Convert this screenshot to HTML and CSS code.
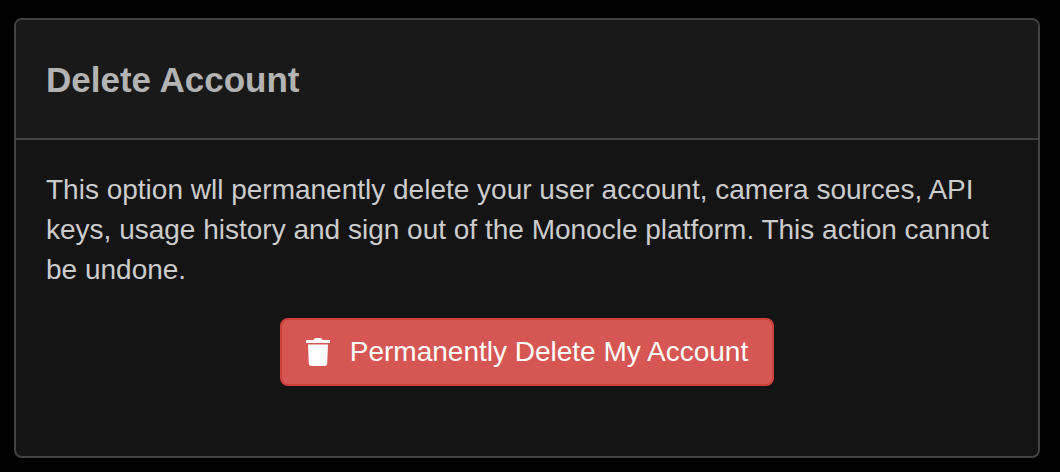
FILE: index.html
```
<!DOCTYPE html>
<html lang="en">
  <head>
    <meta charset="UTF-8" />
    <meta name="viewport" content="width=device-width, initial-scale=1.0" />
    <title>Delete Account</title>
    <link rel="stylesheet" href="styles.css">
  </head>
  <body>
    <section class="card">
      <div class="card-header">
        <h2>Delete Account</h2>
      </div>
      <div class="card-body">
        <p>
          This option wll permanently delete your user account, camera sources, API
          keys, usage history and sign out of the Monocle platform. This action cannot
          be undone.
        </p>
        <div class="card-actions">
          <button type="button" class="btn-danger">
            <svg class="icon" viewBox="0 0 24 28" aria-hidden="true">
              <path d="M.5 2H7.500L8.500.500Q8.800 0 9.500 0h5q.7 0 1 .5L16.500 2h7q.5 0 .5.500v2q0 .5-.5.500H.500Q0 5 0 4.500v-2Q0 2 .5 2z" />
              <path d="M2 6.500h20l-.8 19Q21 28 18.600 28H5.400Q3 28 2.800 25.500z" />
            </svg>
            Permanently Delete My Account
          </button>
        </div>
      </div>
    </section>
  </body>
</html>
```
FILE: styles.css
```
* {
  box-sizing: border-box;
  margin: 0;
  padding: 0;
}

body {
  font-family: "Liberation Sans", Arial, sans-serif;
  font-size: 28px;
  line-height: 40px;
  color: #ccc;
  background-color: #000;
  padding: 18px 20px 14px 14px;
}

.card {
  background-color: #141414;
  border: 2px solid #434343;
  border-radius: 8px;
  overflow: hidden;
}

.card-header {
  padding: 39px 30px 37px;
  background-color: #191919;
  border-bottom: 2px solid #434343;
}

.card-header h2 {
  font-size: 35px;
  line-height: 42px;
  font-weight: bold;
  color: #b3b3b3;
}

.card-body {
  padding: 30px 30px 70px;
}

.card-actions {
  display: flex;
  justify-content: center;
  margin-top: 28px;
}

.btn-danger {
  display: flex;
  align-items: center;
  gap: 20px;
  padding: 12px 24px;
  font: inherit;
  color: #fff;
  background-color: #d55653;
  border: 2px solid #cf403d;
  border-radius: 8px;
  cursor: pointer;
}

.icon {
  width: 24px;
  height: 28px;
  fill: currentColor;
}
```
